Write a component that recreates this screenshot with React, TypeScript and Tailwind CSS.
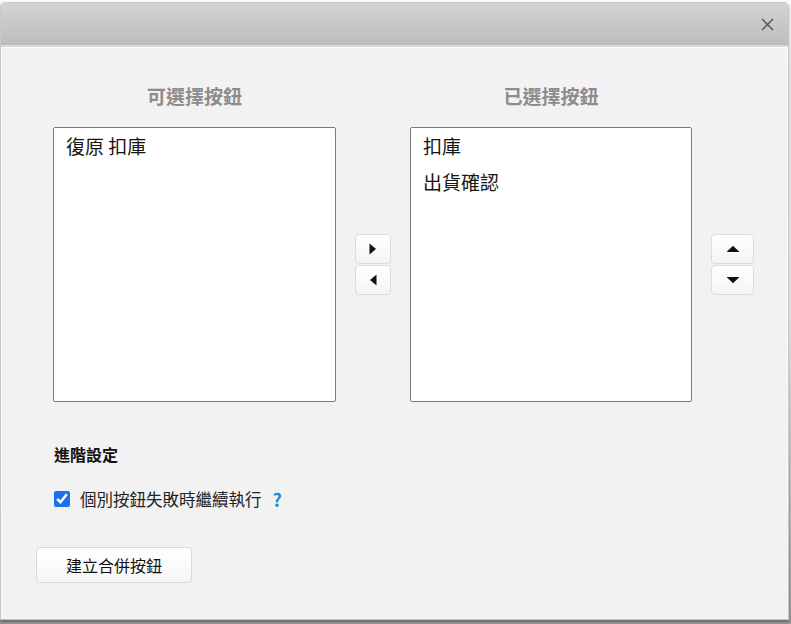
import React from 'react';

const font = { fontFamily: '"Noto Sans CJK TC", "Noto Sans", sans-serif' };

const ArrowButton: React.FC<{ dir: 'left' | 'right' | 'up' | 'down'; className?: string }> = ({ dir, className }) => {
  const paths: Record<string, string> = {
    right: 'M3.5 1.5 L10 7 L3.5 12.5 Z',
    left: 'M10.5 1.5 L4 7 L10.5 12.5 Z',
    up: 'M0.5 10 L7 3.8 L13.5 10 Z',
    down: 'M0.5 4 L7 10.2 L13.5 4 Z',
  };
  return (
    <button
      className={`flex h-[30px] items-center justify-center rounded-[4px] border border-[#dcdcdc] bg-gradient-to-b from-white to-[#f4f4f4] ${className ?? ''}`}
    >
      <svg width="14" height="14" viewBox="0 0 14 14">
        <path d={paths[dir]} fill="#111" />
      </svg>
    </button>
  );
};

const ListBox: React.FC<{ items: string[] }> = ({ items }) => (
  <div className="h-[275px] w-full rounded-[2px] border border-[#7a7a7a] bg-white pt-[4px]">
    {items.map((it) => (
      <div key={it} className="h-[36px] px-[12px] text-[19px] leading-[28px] text-[#161616]">
        {it}
      </div>
    ))}
  </div>
);

export default function App() {
  return (
    <div className="h-[624px] w-[791px] overflow-hidden bg-gradient-to-b from-[#fafafa] via-[#f4f4f4] to-[#9a9a9a]" style={font}>
      <div className="mt-[2px] h-[618px] w-[789px] overflow-hidden rounded-t-[5px] border border-[#c8c8c8] bg-[#f2f2f2] shadow-[0_2px_3px_rgba(0,0,0,0.35)]">
        <div className="flex h-[44px] items-center justify-end border-b-[2px] border-[#d9d9d9] bg-gradient-to-b from-[#d3d3d3] to-[#bdbdbd] pr-[14px]">
          <svg width="13" height="13" viewBox="0 0 13 13">
            <path d="M1 1 L12 12 M12 1 L1 12" stroke="#555" strokeWidth="1.5" />
          </svg>
        </div>
        <div className="border-l border-r border-t border-white/70 pl-[51px] pr-[20px] pt-[34px]">
          <div className="flex items-end gap-[19px]">
            <div className="w-[283px] shrink-0">
              <div className="mb-[17px] text-center text-[19px] font-bold leading-[28px] text-[#8c8c8c]">可選擇按鈕</div>
              <ListBox items={['復原 扣庫']} />
            </div>
            <div className="flex h-[275px] w-[36px] shrink-0 flex-col justify-center gap-[1px]">
              <ArrowButton dir="right" className="w-[36px]" />
              <ArrowButton dir="left" className="w-[36px]" />
            </div>
            <div className="w-[282px] shrink-0">
              <div className="mb-[17px] text-center text-[19px] font-bold leading-[28px] text-[#8c8c8c]">已選擇按鈕</div>
              <ListBox items={['扣庫', '出貨確認']} />
            </div>
            <div className="flex h-[275px] w-[43px] shrink-0 flex-col justify-center gap-[1px]">
              <ArrowButton dir="up" className="w-[43px]" />
              <ArrowButton dir="down" className="w-[43px]" />
            </div>
          </div>
          <div className="mt-[40px] pl-[1px] text-[16px] font-bold leading-[24px] text-[#111]">進階設定</div>
          <label className="mt-[21px] flex items-center gap-[10px] pl-[1px] text-[16.5px] leading-[24px] text-[#222]">
            <input type="checkbox" defaultChecked className="h-[16px] w-[16px] accent-[#1a73e8]" />
            <span>個別按鈕失敗時繼續執行</span>
            <span className="ml-[1px] text-[18px] font-bold text-[#1e8ad0]">?</span>
          </label>
        </div>
        <div className="pl-[35px] pt-[36px]">
          <button className="h-[36px] w-[156px] rounded-[4px] border border-[#dadada] bg-gradient-to-b from-white to-[#f6f6f6] text-[16px] text-[#111]">
            建立合併按鈕
          </button>
        </div>
      </div>
    </div>
  );
}
